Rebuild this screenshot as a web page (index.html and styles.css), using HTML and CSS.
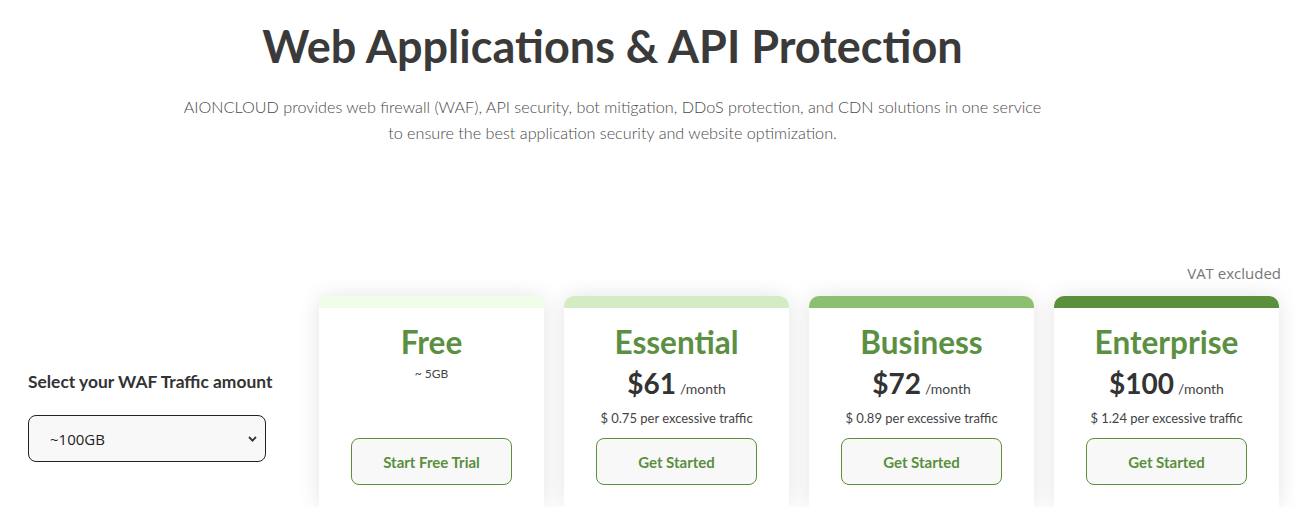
FILE: index.html
```html
<!DOCTYPE html>
<html lang="en">
<head>
<meta charset="utf-8">
<title>Web Applications &amp; API Protection</title>
<link rel="stylesheet" href="styles.css">
</head>
<body>
<header class="intro">
  <h1 class="intro-title">Web Applications &amp; API Protection</h1>
  <p class="intro-text">AIONCLOUD provides web firewall (WAF), API security, bot mitigation, DDoS protection, and CDN solutions in one service<br>to ensure the best application security and website optimization.</p>
</header>
<section class="pricing">
  <div class="traffic">
    <label class="traffic-label" for="traffic">Select your WAF Traffic amount</label>
    <select id="traffic" class="traffic-select">
      <option>~100GB</option>
      <option>~200GB</option>
      <option>~500GB</option>
    </select>
  </div>
  <div class="plans-wrap">
    <div class="vat">VAT excluded</div>
    <div class="plans">
      <div class="plan plan-free">
        <div class="plan-bar"></div>
        <div class="plan-body">
          <h2 class="plan-name">Free</h2>
          <div class="plan-info">
            <div class="plan-quota">~ 5GB</div>
          </div>
          <a class="plan-btn" href="#">Start Free Trial</a>
        </div>
      </div>
      <div class="plan plan-essential">
        <div class="plan-bar"></div>
        <div class="plan-body">
          <h2 class="plan-name">Essential</h2>
          <div class="plan-info">
            <div class="plan-price"><span class="price-num">$61</span><span class="price-per">/month</span></div>
            <div class="plan-extra">$ 0.75 per excessive traffic</div>
          </div>
          <a class="plan-btn" href="#">Get Started</a>
        </div>
      </div>
      <div class="plan plan-business">
        <div class="plan-bar"></div>
        <div class="plan-body">
          <h2 class="plan-name">Business</h2>
          <div class="plan-info">
            <div class="plan-price"><span class="price-num">$72</span><span class="price-per">/month</span></div>
            <div class="plan-extra">$ 0.89 per excessive traffic</div>
          </div>
          <a class="plan-btn" href="#">Get Started</a>
        </div>
      </div>
      <div class="plan plan-enterprise">
        <div class="plan-bar"></div>
        <div class="plan-body">
          <h2 class="plan-name">Enterprise</h2>
          <div class="plan-info">
            <div class="plan-price"><span class="price-num">$100</span><span class="price-per">/month</span></div>
            <div class="plan-extra">$ 1.24 per excessive traffic</div>
          </div>
          <a class="plan-btn" href="#">Get Started</a>
        </div>
      </div>
    </div>
  </div>
</section>
</body>
</html>
```
FILE: styles.css
```css
* { box-sizing: border-box; }
html, body { margin: 0; padding: 0; background: #fff; }
body {
  font-family: "Lato", "Noto Sans", sans-serif;
  color: #333;
  overflow: hidden;
  height: 507px;
}
.intro {
  width: 1225px;
  text-align: center;
  padding-top: 18px;
}
.intro-title {
  margin: 0;
  font-size: 45px;
  font-weight: 700;
  color: #3a3a3a;
  line-height: 56px;
}
.intro-text {
  margin: 20px 0 0;
  font-size: 16.2px;
  font-weight: 300;
  color: #4a4a4a;
  line-height: 26px;
}
.pricing {
  display: flex;
  margin-top: 117px;
}
.traffic {
  width: 319px;
  padding-left: 28px;
  padding-top: 108px;
}
.traffic-label {
  display: block;
  font-size: 17.4px;
  font-weight: 700;
  color: #333;
  line-height: 22px;
}
.traffic-select {
  appearance: none;
  -webkit-appearance: none;
  margin-top: 22px;
  width: 238px;
  height: 47px;
  border: 1px solid #222;
  border-radius: 8px;
  background: #f8f8f8 url("data:image/svg+xml,%3Csvg xmlns='http://www.w3.org/2000/svg' width='9' height='6' viewBox='0 0 9 6'%3E%3Cpath d='M1 1 4.5 4.6 8 1' fill='none' stroke='%23333' stroke-width='1.8'/%3E%3C/svg%3E") no-repeat right 8px center;
  padding-left: 21px;
  font-family: "Open Sans", sans-serif;
  font-size: 15px;
  color: #222;
}
.plans-wrap {
  width: 962px;
}
.vat {
  text-align: right;
  font-family: "Open Sans", sans-serif;
  font-weight: 400;
  font-size: 15px;
  color: #777;
  line-height: 20px;
  height: 33px;
}
.plans {
  display: flex;
  gap: 20px;
}
.plan {
  width: 225px;
  height: 211px;
  background: #fff;
  border-radius: 10px 10px 0 0;
  box-shadow: 0 0 22px rgba(0,0,0,0.11);
  overflow: hidden;
}
.plan-bar { height: 12px; }
.plan-free .plan-bar { background: #f0fde8; }
.plan-essential .plan-bar { background: #d3ecc4; }
.plan-business .plan-bar { background: #8cc070; }
.plan-enterprise .plan-bar { background: #5a8f3c; }
.plan-body {
  display: flex;
  flex-direction: column;
  align-items: center;
  padding-top: 16px;
}
.plan-name {
  margin: 0;
  font-size: 31.5px;
  font-weight: 700;
  color: #5b8f41;
  line-height: 36px;
}
.plan-info {
  height: 78px;
  text-align: center;
  padding-top: 6px;
}
.plan-quota {
  font-size: 12px;
  color: #444;
  line-height: 16px;
}
.plan-price {
  line-height: 34px;
}
.price-num {
  font-size: 28px;
  font-weight: 700;
  color: #333;
}
.price-per {
  font-size: 14px;
  color: #444;
  margin-left: 4px;
}
.plan-extra {
  font-size: 13px;
  color: #444;
  line-height: 17px;
  margin-top: 4px;
}
.plan-btn {
  display: flex;
  align-items: center;
  justify-content: center;
  width: 161px;
  height: 47px;
  border: 1px solid #5a8f3c;
  border-radius: 8px;
  background: #f8f8f8;
  color: #5a8f3c;
  font-size: 15px;
  font-weight: 700;
  text-decoration: none;
}
```
